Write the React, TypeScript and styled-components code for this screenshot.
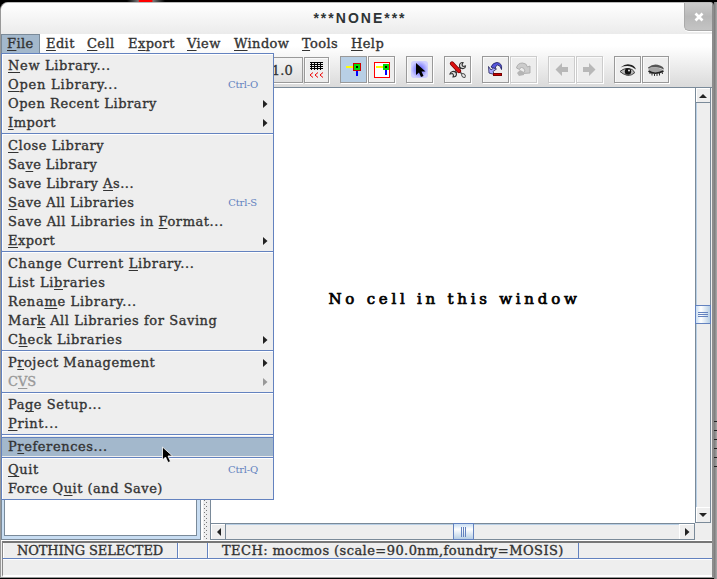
import React from "react";
import styled, { createGlobalStyle, css } from "styled-components";

const Global = createGlobalStyle`
  * { box-sizing: border-box; }
  body { margin: 0; overflow: hidden; background: #000; }
`;

const slate = "#7a8a99";
const blue = "#6382bf";
const face = "#eeeeee";

const Desktop = styled.div`
  position: relative;
  width: 717px;
  height: 579px;
  display: flex;
  background: #000;
  padding-top: 2px;
  font-family: "DejaVu Serif", serif;
  font-size: 13px;
  color: #333;
`;
const RedSpot = styled.div`
  position: absolute;
  left: 127px;
  top: 0;
  width: 38px;
  height: 2px;
  background: linear-gradient(90deg, #000, #777 30%, #f00 31%, #f00 66%, #777 68%, #000);
`;
const Frame = styled.div`
  width: 714px;
  height: 576px;
  display: flex;
  flex-direction: column;
  border: 1px solid #999;
  border-top-color: #bbb;
  border-right: 2px solid #8d8d8d;
  border-radius: 8px 4px 0 0;
  background: ${face};
  overflow: hidden;
`;
const Behind = styled.div`
  width: 3px;
  height: 577px;
  background: linear-gradient(90deg, #777, #aaa);
  display: flex;
  flex-direction: column;
  justify-content: flex-end;
  gap: 8px;
  padding-bottom: 112px;
`;
const Mark = styled.i`
  height: 1px;
  background: #222;
`;
const TitleBar = styled.div`
  height: 31px;
  flex: none;
  display: flex;
  justify-content: flex-end;
  background: linear-gradient(#fff, #ebebeb);
`;
const Title = styled.div`
  flex: 1;
  padding-left: 35px;
  text-align: center;
  font: bold 14px/30px "Liberation Sans", sans-serif;
  letter-spacing: 2px;
  color: #2e3436;
`;
const Close = styled.div`
  width: 28px;
  height: 28px;
  display: flex;
  align-items: center;
  justify-content: center;
  background: linear-gradient(#ccc, #b8b8b8 50%, #c4c4c4);
  border: 1px solid #aaa;
  border-width: 0 0 1px 1px;
  border-radius: 0 0 0 5px;
  box-shadow: 0 1px #fff;
`;
const Chrome = styled.div`
  height: 54px;
  flex: none;
  background: linear-gradient(#fff, #fff 12px, #dadada);
  border-bottom: 1px solid ${slate};
`;
const MenuBar = styled.div`
  height: 19px;
  display: flex;
`;
const MenuTitle = styled.div<{ $w: number; $open?: boolean }>`
  width: ${(p) => p.$w}px;
  padding-left: 6px;
  line-height: 20px;
  white-space: nowrap;
  letter-spacing: 0.4px;
  -webkit-text-stroke: 0.35px;
  ${(p) =>
    p.$open &&
    css`
      background: #a3b8cc;
      border: 1px solid ${slate};
      border-bottom: 0;
      padding-left: 5px;
      line-height: 18px;
    `}
`;
const Toolbar = styled.div`
  display: flex;
  height: 33px;
  padding: 3px 0 0 240px;
  align-items: flex-start;
`;
const Scale = styled.div`
  width: 62px;
  height: 26px;
  margin-top: 1px;
  border: 1px solid #999;
  box-shadow: 0 1px #fff;
  text-align: right;
  padding-right: 9px;
  line-height: 25px;
  letter-spacing: 0.2px;
  -webkit-text-stroke: 0.3px;
`;
const Tool = styled.div<{ $gap?: number; $on?: boolean; $off?: boolean; $small?: boolean }>`
  width: ${(p) => (p.$small ? 25 : 27)}px;
  height: ${(p) => (p.$small ? 26 : 27)}px;
  margin: ${(p) => (p.$small ? 1 : 0)}px 0 0 ${(p) => p.$gap ?? 1}px;
  display: flex;
  align-items: center;
  justify-content: center;
  border: 1px solid ${(p) => (p.$off ? "#ccc" : "#999")};
  background: ${(p) => (p.$on ? "#b8cfe5" : p.$off ? "#ededed" : "#eee")};
  box-shadow: 1px 1px #fff, inset 1px 1px ${(p) => (p.$on ? "#b8cfe5" : "#fafafa")};
  svg { display: block; }
`;
const Work = styled.div`
  height: 453px;
  flex: none;
  display: flex;
  border-bottom: 1px solid #fff;
`;
const Explorer = styled.div`
  width: 200px;
  background: #fff;
  border: 1px solid ${slate};
  box-shadow: inset 0 0 0 3px #c8ddf2;
  padding: 4px 3px 3px 2px;
  display: flex;
`;
const ExplorerPage = styled.div`
  flex: 1;
  border: 1px solid ${slate};
  background: #fff;
`;
const Divider = styled.div`
  width: 9px;
  padding-left: 1px;
  border: solid ${face};
  border-width: 0 2px;
  border-left-color: #fff;
  background: ${face};
`;
const Editor = styled.div`
  flex: 1;
  display: grid;
  grid-template-columns: 1fr 16px;
  grid-template-rows: 1fr 17px;
  border-left: 1px solid ${slate};
  padding-right: 1px;
  background: ${face};
`;
const Canvas = styled.div`
  background: #fff;
  display: flex;
  align-items: center;
  justify-content: center;
  color: #000;
  font-size: 15px;
  -webkit-text-stroke: 0.7px;
  letter-spacing: 3.75px;
  white-space: nowrap;
  padding: 0 0 14px 3px;
`;
const Scrollbar = styled.div<{ $v?: boolean }>`
  display: flex;
  flex-direction: ${(p) => (p.$v ? "column" : "row")};
  border: 1px solid ${slate};
  ${(p) => (p.$v ? "border-top: 0;" : "border-left: 0;")}
  background: ${face};
`;
const Arrow = styled.div`
  flex: 0 0 15px;
  display: flex;
  align-items: center;
  justify-content: center;
  box-shadow: inset 1px 1px #fff;
`;
const Track = styled.div<{ $v?: boolean; $len?: number }>`
  flex: ${(p) => (p.$len ? `0 0 ${p.$len}px` : "1")};
  border: 0 solid #b8cfe5;
  ${(p) => (p.$v ? "border-left-width: 1px;" : "border-top-width: 1px;")}
  box-shadow: 0 0 0 1px ${slate};
`;
const Thumb = styled.div<{ $v?: boolean }>`
  position: relative;
  flex: 0 0 ${(p) => (p.$v ? 19 : 21)}px;
  margin: ${(p) => (p.$v ? "0 -1px" : "-1px 0")};
  border: 1px solid ${blue};
  background: linear-gradient(${(p) => (p.$v ? "90deg" : "180deg")}, #c8ddf2, #fff 35%, #b8cfe5);
  display: flex;
  align-items: center;
  justify-content: center;
`;
const Status = styled.div`
  height: 18px;
  flex: none;
  display: flex;
  margin-left: 1px;
  border-top: 2px solid #777;
  border-left: 1px solid #888;
  border-bottom: 1px solid ${blue};
  box-shadow: 0 1px #fff;
`;
const Field = styled.div<{ $w: number; $ls?: number }>`
  width: ${(p) => p.$w}px;
  padding-left: 14px;
  line-height: 16px;
  white-space: nowrap;
  border-right: 1px solid ${blue};
  box-shadow: inset 1px 0 #fff;
  letter-spacing: ${(p) => p.$ls ?? 0}px;
  -webkit-text-stroke: 0.35px;
`;
const Messages = styled.div`
  flex: 1;
  margin-left: 1px;
  border-left: 1px solid #888;
  border-bottom: 2px solid #fff;
`;
const Popup = styled.div`
  position: absolute;
  left: 1px;
  top: 53px;
  width: 273px;
  height: 447px;
  padding-top: 2px;
  border: 1px solid ${blue};
  background: ${face};
  box-shadow: inset 1px 1px #fff;
`;
const Item = styled.div<{ $hot?: boolean; $off?: boolean; $ls: number }>`
  height: 19px;
  padding: 0 3px 0 6px;
  display: flex;
  align-items: center;
  justify-content: space-between;
  line-height: 17px;
  white-space: nowrap;
  letter-spacing: ${(p) => p.$ls}px;
  color: ${(p) => (p.$off ? "#999" : "#333")};
  -webkit-text-stroke: 0.35px;
  ${(p) =>
    p.$hot &&
    css`
      background: #a3b8cc;
      box-shadow: inset 0 1px ${blue};
    `}
`;
const Label = styled.span`
  u { text-underline-offset: 2px; text-decoration-thickness: 1px; text-decoration-skip-ink: none; }
`;
const Shortcut = styled.span<{ $r: number }>`
  font-size: 10px;
  letter-spacing: -0.2px;
  color: ${blue};
  margin-right: ${(p) => p.$r}px;
  -webkit-text-stroke: 0;
`;
const Separator = styled.div`
  height: 4px;
  border-top: 1px solid ${face};
  box-shadow: inset 0 1px ${blue}, inset 0 2px #fff;
`;
const Pointer = styled.svg`
  position: absolute;
  left: 161px;
  top: 446px;
`;

type Entry = { t: string; ls: number; key?: string; r?: number; sub?: boolean; off?: boolean; hot?: boolean };
const groups: Entry[][] = [
  [
    { t: "_New Library...", ls: 0.66 },
    { t: "_Open Library...", ls: 0.78, key: "Ctrl-O", r: 12 },
    { t: "Open Recent Library", ls: 0.57, sub: true },
    { t: "_Import", ls: 0.5, sub: true },
  ],
  [
    { t: "_Close Library", ls: 0.54 },
    { t: "Sa_ve Library", ls: 0.4 },
    { t: "Save Library _As...", ls: 0.5 },
    { t: "_Save All Libraries", ls: 0.5, key: "Ctrl-S", r: 13 },
    { t: "Save All Libraries in _Format...", ls: 0.56 },
    { t: "_Export", ls: 0.45, sub: true },
  ],
  [
    { t: "Change Current _Library...", ls: 0.66 },
    { t: "List Li_braries", ls: 0.63 },
    { t: "Rena_me Library...", ls: 0.69 },
    { t: "Mar_k All Libraries for Saving", ls: 0.57 },
    { t: "C_heck Libraries", ls: 0.62, sub: true },
  ],
  [
    { t: "P_roject Management", ls: 0.52, sub: true },
    { t: "C_VS", ls: 0, sub: true, off: true },
  ],
  [{ t: "Pa_ge Setup...", ls: 0.53 }, { t: "_Print...", ls: 0.72 }],
  [{ t: "P_references...", ls: 0.59, hot: true }],
  [{ t: "_Quit", ls: 0.6, key: "Ctrl-Q", r: 12 }, { t: "Force Q_uit (and Save)", ls: 0.5 }],
];

function Mnemonic({ t }: { t: string }) {
  const i = t.indexOf("_");
  if (i < 0) return <Label>{t}</Label>;
  return (
    <Label>
      {t.slice(0, i)}
      <u>{t[i + 1]}</u>
      {t.slice(i + 2)}
    </Label>
  );
}

function Triangle({ dir, color = "#222" }: { dir: "l" | "r" | "u" | "d"; color?: string }) {
  const d = { l: "M7 1v8L3 5z", r: "M3 1v8l4.500-4z", u: "M1 7h8L5 3z", d: "M1 3h8L5 7z" }[dir];
  return (
    <svg width="10" height="10">
      <path d={d} fill={color} />
    </svg>
  );
}

const menus: [string, number][] = [
  ["_File", 39],
  ["_Edit", 41],
  ["_Cell", 41],
  ["E_xport", 59],
  ["_View", 47],
  ["_Window", 68],
  ["_Tools", 49],
  ["_Help", 50],
];

const GripDots = () => (
  <svg width="4" height="452" shapeRendering="crispEdges">
    <defs>
      <pattern id="grip" width="4" height="4" patternUnits="userSpaceOnUse">
        <rect width="1" height="1" fill="#777" />
        <rect x="2" y="2" width="1" height="1" fill="#777" />
      </pattern>
    </defs>
    <rect width="4" height="452" fill="url(#grip)" />
  </svg>
);
const GridIcon = () => (
  <svg width="15" height="17" shapeRendering="crispEdges">
    {[1, 3, 5, 7].map((y) => (
      <path key={y} d={`M1 ${y - 0.5}h13`} stroke="#000" />
    ))}
    <path d="M2.500 0v8M5.500 0v8M8.500 0v8M11.500 0v8" stroke="#000" />
    <path d="M4 10.500l-3 2.500 3 2.500M9 10.500l-3 2.500 3 2.500M14 10.500l-3 2.500 3 2.500" stroke="#e00" strokeWidth="1" fill="none" shapeRendering="auto" />
  </svg>
);
const WireIcon = ({ boxed }: { boxed?: boolean }) => (
  <svg width="17" height="17" shapeRendering="crispEdges">
    {boxed ? (
      <>
        <rect x="1.500" y="1.500" width="15" height="15" fill="#fff" stroke="#f00" />
        <path d="M3 6h7" stroke="#ff0" strokeWidth="2" />
        <path d="M13 9v5" stroke="#00f" strokeWidth="2" />
        <rect x="10" y="3" width="6" height="6" fill="#0d0" />
        <rect x="12" y="5" width="2" height="2" fill="#000" />
      </>
    ) : (
      <>
        <path d="M1 6h7" stroke="#ff0" strokeWidth="2" />
        <path d="M12 10v5" stroke="#00f" strokeWidth="2" />
        <rect x="8.500" y="2.500" width="7" height="7" fill="#0d0" stroke="#c00" />
        <rect x="11" y="5" width="2" height="2" fill="#000" />
      </>
    )}
  </svg>
);
const SelectIcon = () => (
  <svg width="17" height="17">
    <defs>
      <radialGradient id="glow">
        <stop offset="0.3" stopColor="#77f" />
        <stop offset="1" stopColor="#d0d0ff" />
      </radialGradient>
    </defs>
    <rect width="17" height="17" rx="3" fill="url(#glow)" />
    <path d="M5 2v12l3-2.500 2 4.500 2.500-1-2-4.500h4z" fill="#000" />
  </svg>
);
const KnifeIcon = () => (
  <svg width="18" height="18" fill="none">
    <path d="M5 12.500L13 5" stroke="#333" strokeWidth="2.600" />
    <path d="M5 12.500L13 5" stroke="#ddd" strokeWidth="1" />
    <path d="M14 1.500q-4 0-3.500 4 1 2.500 4 2 2-.5 2-2.500l-2.500.5-1-1.500zM4 16q3.500 0 3.500-3-.5-3-4-2.500-2 .5-2.500 2.500l2.500-.5 1 1.500z" fill="#ddd" stroke="#333" strokeWidth="1.100" />
    <path d="M10 10l4 4" stroke="#555" strokeWidth="1.400" />
    <ellipse cx="14.500" cy="14.500" rx="2.200" ry="1.500" transform="rotate(45 14.500 14.500)" fill="#eee" stroke="#555" />
    <path d="M3 2.500l7 7.500" stroke="#700" strokeWidth="4.200" strokeLinecap="round" />
    <path d="M3 2.500l7 7.500" stroke="#d11" strokeWidth="2.800" strokeLinecap="round" />
  </svg>
);
const UndoIcon = () => (
  <svg width="17" height="17">
    <path d="M4 6q2-4.500 6-4.500 5.500.5 4.500 7-1-4.500-4-4.500-2 .5-2.500 4z" fill="#55d" stroke="#226" strokeWidth="0.900" />
    <path d="M1.500 5.500l.5 6.500 5.500 1.500-1.500-3 3.500-2.500-3-1L4 9z" fill="#aaf" stroke="#336" strokeWidth="0.900" />
    <rect x="6.500" y="12.500" width="8" height="2" fill="#c00" stroke="#700" />
  </svg>
);
const RedoIcon = () => (
  <svg width="17" height="17">
    <path d="M1.500 7q1-5 6-5 4 0 5 4l2.500-1v7l-7 .5 2-2.500q-1-4-3.500-3.500-2 .5-2 2z" fill="#ccc" stroke="#aaa" strokeWidth="0.900" />
    <path d="M2 12l3-3 4 2v3l-5 1z" fill="#b5b5b5" />
  </svg>
);
const NavIcon = ({ back }: { back?: boolean }) => (
  <svg width="15" height="15">
    <path
      d={back ? "M1.500 7.500L8 1v4h6v5H8v4z" : "M13.500 7.500L7 1v4H1v5h6v4z"}
      fill="#b8b8b8"
    />
  </svg>
);
const EyeIcon = () => (
  <svg width="18" height="16">
    <path d="M1.500 5.500q5-4 9-3 5 .5 6.500 5l-4-2.500q-5-2-11.500.5z" fill="#222" />
    <path d="M1 9.500q6-5 12-2 2 1 2.500 3.500-3 2.500-7 2.500-5-1.500-7.500-4z" fill="#bbb" stroke="#444" />
    <circle cx="9" cy="9.500" r="3.200" fill="#111" />
    <circle cx="10" cy="8.500" r="0.900" fill="#fff" />
  </svg>
);
const ClosedEyeIcon = () => (
  <svg width="18" height="16">
    <path d="M1 5.500q6-5 12-2 3.500 1 4 4-8-4-16-1z" fill="#555" />
    <path d="M1 6.500q8-3 15.500 1.500-4 4-10 3-4-1-5.500-4.500z" fill="#a5a5a5" />
    <path d="M1.500 9q6 4.500 15 0" fill="none" stroke="#222" strokeWidth="1.600" />
    <path d="M3 10v2M5 11v2.500M7.500 11v3M10 11v3M12.500 11v2.500M15 10l.5 2" stroke="#333" />
  </svg>
);

export default function App() {
  return (
    <>
      <Global />
      <Desktop>
        <RedSpot />
        <Frame>
          <TitleBar>
            <Title>***NONE***</Title>
            <Close>
              <svg width="10" height="10">
                <path d="M1.500 1.500l7 7M8.500 1.500l-7 7" stroke="#fff" strokeWidth="2.700" />
              </svg>
            </Close>
          </TitleBar>
          <Chrome>
            <MenuBar>
              {menus.map(([t, w], i) => (
                <MenuTitle key={t} $w={w} $open={i === 0}>
                  <Mnemonic t={t} />
                </MenuTitle>
              ))}
            </MenuBar>
            <Toolbar>
              <Scale>1.0</Scale>
              <Tool $small><GridIcon /></Tool>
              <Tool $on $gap={11}><WireIcon /></Tool>
              <Tool><WireIcon boxed /></Tool>
              <Tool $gap={11}><SelectIcon /></Tool>
              <Tool $gap={11}><KnifeIcon /></Tool>
              <Tool $gap={11}><UndoIcon /></Tool>
              <Tool $off><RedoIcon /></Tool>
              <Tool $off $gap={11}><NavIcon back /></Tool>
              <Tool $off><NavIcon /></Tool>
              <Tool $gap={11}><EyeIcon /></Tool>
              <Tool><ClosedEyeIcon /></Tool>
            </Toolbar>
          </Chrome>
          <Work>
            <Explorer>
              <ExplorerPage />
            </Explorer>
            <Divider>
              <GripDots />
            </Divider>
            <Editor>
              <Canvas>No cell in this window</Canvas>
              <Scrollbar $v>
                <Arrow><Triangle dir="u" /></Arrow>
                <Track $v $len={202} />
                <Thumb $v>
                  <svg width="10" height="7" shapeRendering="crispEdges">
                    <path d="M0 1.500h10M0 3.500h10M0 5.500h10" stroke={blue} />
                  </svg>
                </Thumb>
                <Track $v />
                <Arrow><Triangle dir="d" /></Arrow>
              </Scrollbar>
              <Scrollbar>
                <Arrow><Triangle dir="l" /></Arrow>
                <Track $len={227} />
                <Thumb>
                  <svg width="7" height="10" shapeRendering="crispEdges">
                    <path d="M1.500 0v10M3.500 0v10M5.500 0v10" stroke={blue} />
                  </svg>
                </Thumb>
                <Track />
                <Arrow><Triangle dir="r" /></Arrow>
              </Scrollbar>
            </Editor>
          </Work>
          <Status>
            <Field $w={175} $ls={-0.13}>NOTHING SELECTED</Field>
            <Field $w={30} />
            <Field $w={371} $ls={0.44}>TECH: mocmos (scale=90.0nm,foundry=MOSIS)</Field>
          </Status>
          <Messages />
        </Frame>
        <Behind>
          {[0, 1, 2, 3, 4, 5].map((n) => (
            <Mark key={n} />
          ))}
        </Behind>
        <Popup>
          {groups.map((g, i) => (
            <React.Fragment key={i}>
              {i > 0 && <Separator />}
              {g.map((e) => (
                <Item key={e.t} $ls={e.ls} $hot={e.hot} $off={e.off}>
                  <Mnemonic t={e.t} />
                  {e.key && <Shortcut $r={e.r ?? 9}>{e.key}</Shortcut>}
                  {e.sub && <Triangle dir="r" color={e.off ? "#999" : "#222"} />}
                </Item>
              ))}
            </React.Fragment>
          ))}
        </Popup>
        <Pointer width="14" height="18">
          <path d="M1.500 1v13l3-3 2.500 5.500 2.500-1-2.500-5.500h4.500z" fill="#000" stroke="#fff" strokeWidth="0.800" />
        </Pointer>
      </Desktop>
    </>
  );
}
